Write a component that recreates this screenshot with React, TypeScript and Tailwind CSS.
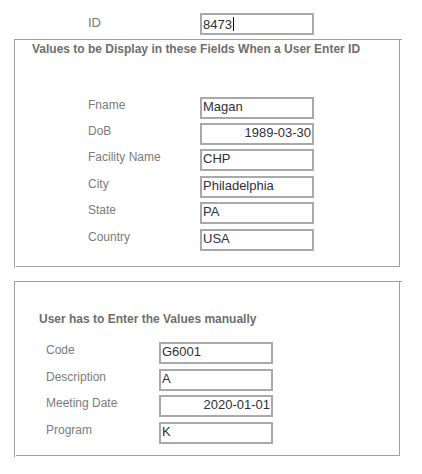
import React from 'react';

type FieldProps = {
  value: string;
  right?: boolean;
  caret?: boolean;
};

function Field({ value, right, caret }: FieldProps) {
  return (
    <div
      className={
        'box-border h-[22px] w-[114px] shrink-0 border-2 border-[#a9a9a9] px-[1px] pt-0 text-[13px] leading-[15px] text-[#2f2f3a] ' +
        (right ? 'text-right' : 'text-left')
      }
    >
      {value}
      {caret && <span className="ml-[1px] inline-block h-[14px] w-[1px] translate-y-[2px] bg-black" />}
    </div>
  );
}

type RowProps = {
  label: string;
  value: string;
  right?: boolean;
  labelWidth: string;
  gap: string;
};

function Row({ label, value, right, labelWidth, gap }: RowProps) {
  return (
    <div className={'flex items-start ' + gap}>
      <div className={'pt-[2px] text-[12px] leading-[13px] text-[#7b7b7b] ' + labelWidth}>{label}</div>
      <Field value={value} right={right} />
    </div>
  );
}

const displayRows = [
  { label: 'Fname', value: 'Magan', gap: 'mt-0' },
  { label: 'DoB', value: '1989-03-30', right: true, gap: 'mt-[4px]' },
  { label: 'Facility Name', value: 'CHP', gap: 'mt-[4px]' },
  { label: 'City', value: 'Philadelphia', gap: 'mt-[5px]' },
  { label: 'State', value: 'PA', gap: 'mt-[4px]' },
  { label: 'Country', value: 'USA', gap: 'mt-[5px]' },
];

const manualRows = [
  { label: 'Code', value: 'G6001', gap: 'mt-0' },
  { label: 'Description', value: 'A', gap: 'mt-[5px]' },
  { label: 'Meeting Date', value: '2020-01-01', right: true, gap: 'mt-[4px]' },
  { label: 'Program', value: 'K', gap: 'mt-[5px]' },
];

export default function App() {
  return (
    <div className="h-[474px] w-[422px] bg-white font-['Liberation_Sans',Arial,sans-serif]">
      {/* ID lookup */}
      <div className="flex items-start pt-[13px] pl-[88px]">
        <div className="w-[112px] pt-[2px] text-[13px] leading-[15px] text-[#7b7b7b]">ID</div>
        <Field value="8473" caret />
      </div>

      {/* values filled from ID */}
      <div className="ml-[14px] mt-[4px] w-[388px] border-l border-t border-[#a0a0a0] pb-[1px]">
        <div className="ml-[1px] mr-[2px] border-b border-r border-[#a0a0a0] pb-[15px] pl-[16px] pt-[2px]">
          <div className="text-[12px] font-bold leading-[14px] text-[#6e6e6e]">
            Values to be Display in these Fields When a User Enter ID
          </div>
          <div className="mt-[41px] pl-[56px]">
            {displayRows.map((r) => (
              <Row key={r.label} {...r} labelWidth="w-[112px]" />
            ))}
          </div>
        </div>
      </div>

      {/* manual entry */}
      <div className="ml-[14px] mt-[13px] w-[388px] border-l border-t border-[#a0a0a0] pb-[1px]">
        <div className="ml-[1px] mr-[2px] border-b border-r border-[#a0a0a0] pb-[11px] pl-[23px] pt-[30px]">
          <div className="text-[12px] font-bold leading-[14px] text-[#6e6e6e]">User has to Enter the Values manually</div>
          <div className="mt-[16px] pl-[7px]">
            {manualRows.map((r) => (
              <Row key={r.label} {...r} labelWidth="w-[113px]" />
            ))}
          </div>
        </div>
      </div>
    </div>
  );
}
